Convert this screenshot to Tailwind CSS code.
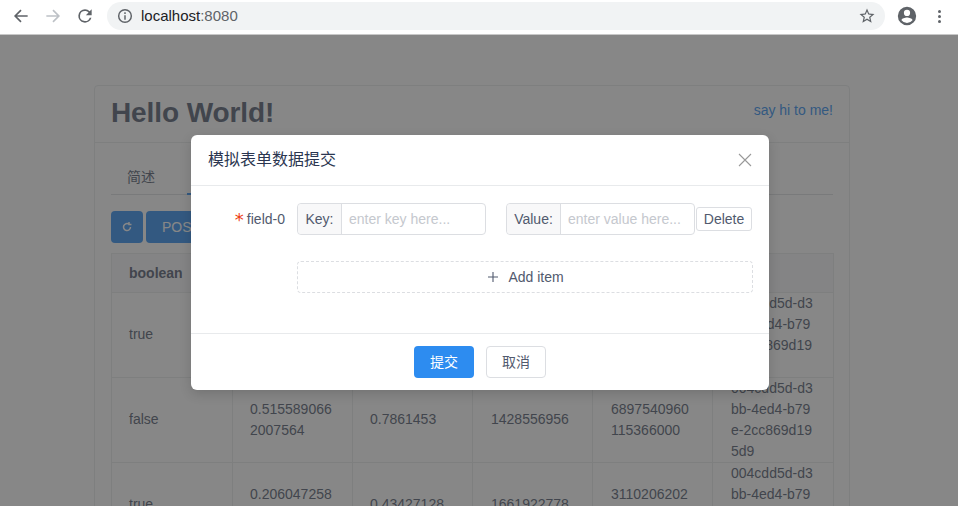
<!DOCTYPE html>
<html lang="zh">
<head>
<meta charset="utf-8">
<script src="https://cdn.jsdelivr.net/npm/@tailwindcss/browser@4"></script>
<title>localhost:8080</title>
</head>
<body class="relative h-[506px] w-[958px] overflow-hidden bg-white font-['Liberation_Sans','Noto_Sans_CJK_SC',sans-serif] text-[14px] text-[#515a6e]">
  <!-- Browser toolbar -->
  <header class="relative z-30 flex h-[35px] items-center border-b border-[#c8c8c8] bg-white pb-[2px]">
    <div class="flex w-[107px] items-center pl-[11px]">
      <svg class="h-5 w-5" viewBox="0 0 24 24" fill="none" stroke="#5f6368" stroke-width="2"><path d="M20 12H5M12 5l-7 7 7 7"/></svg>
      <svg class="ml-3 h-5 w-5" viewBox="0 0 24 24" fill="none" stroke="#bdc1c6" stroke-width="2"><path d="M4 12h15M12 5l7 7-7 7"/></svg>
      <svg class="ml-3 h-5 w-5" viewBox="0 0 24 24" fill="#5f6368"><path d="M17.65 6.35A7.96 7.96 0 0 0 12 4a8 8 0 1 0 7.73 10h-2.08A6 6 0 1 1 12 6c1.66 0 3.14.69 4.22 1.78L13 11h7V4l-2.35 2.35z"/></svg>
    </div>
    <div class="flex h-[28px] w-[778px] items-center rounded-full bg-[#f1f3f4] pl-[10px] pr-[9px]">
      <svg class="h-4 w-4" viewBox="0 0 24 24" fill="none" stroke="#5f6368" stroke-width="2.2"><circle cx="12" cy="12" r="9.5"/><path d="M12 11v6.5M12 6.5v2.4"/></svg>
      <span class="ml-2 text-[15px] text-[#202124]">localhost<span class="text-[#5f6368]">:8080</span></span>
      <svg class="ml-auto h-[18px] w-[18px]" viewBox="0 0 24 24" fill="#5f6368"><path d="M22 9.24l-7.19-.62L12 2 9.19 8.63 2 9.24l5.46 4.73L5.82 21 12 17.27 18.18 21l-1.63-7.03L22 9.24zM12 15.4l-3.76 2.27 1-4.28-3.32-2.88 4.38-.38L12 6.1l1.71 4.04 4.38.38-3.32 2.88 1 4.28L12 15.4z"/></svg>
    </div>
    <svg class="ml-[11px] h-[22px] w-[22px]" viewBox="0 0 24 24" fill="#5f6368"><path d="M12 2a10 10 0 1 0 0 20 10 10 0 0 0 0-20zm0 3.2a3.4 3.4 0 1 1 0 6.8 3.4 3.4 0 0 1 0-6.8zm0 14.4a7.6 7.6 0 0 1-6-3c.1-2 4-3 6-3s5.900 1 6 3a7.600 7.600 0 0 1-6 3z"/></svg>
    <div class="ml-[20px] flex flex-col gap-[2px]">
      <span class="h-[3px] w-[3px] rounded-full bg-[#5f6368]"></span>
      <span class="h-[3px] w-[3px] rounded-full bg-[#5f6368]"></span>
      <span class="h-[3px] w-[3px] rounded-full bg-[#5f6368]"></span>
    </div>
  </header>

  <!-- Page behind the modal -->
  <main class="pl-[94px] pt-[50px]">
    <section class="w-[756px] rounded border border-[#e8eaec] bg-white">
      <div class="flex h-[57px] items-center justify-between border-b border-[#e8eaec] px-4 pb-[2px]">
        <h1 class="text-[28px] font-bold leading-none tracking-[-0.1px] text-[#515a6e]">Hello World!</h1>
        <a class="relative -top-[3px] text-[14px] text-[#2d8cf0]">say hi to me!</a>
      </div>
      <div class="px-4 pt-[17px]">
        <div class="flex h-[35px] border-b border-[#dcdee2]">
          <div class="mr-4 px-4 pt-[7px] leading-[21px]">简述</div>
          <div class="-mb-px border-b-2 border-[#2d8cf0] px-4 pt-[7px] leading-[21px] text-[#2d8cf0]">数据</div>
        </div>
        <div class="mt-4 flex gap-[3px]">
          <button class="flex h-8 w-8 items-center justify-center rounded bg-[#2d8cf0]">
            <svg class="h-3 w-3" viewBox="0 0 24 24" fill="none" stroke="#fff" stroke-width="3"><path d="M19 12a7 7 0 1 1-3-5.700M16 2v5h5"/></svg>
          </button>
          <button class="h-8 rounded bg-[#2d8cf0] px-4 text-white">POST</button>
        </div>
        <table class="mt-[10px] w-[722px] table-fixed border border-[#e8eaec] leading-[21px]">
          <colgroup><col class="w-[121px]"><col class="w-[120px]"><col class="w-[120px]"><col class="w-[120px]"><col class="w-[120px]"><col class="w-[121px]"></colgroup>
          <thead>
            <tr class="h-[39px] bg-[#f8f8f9] font-bold">
              <th class="border border-[#e8eaec] pl-[17px] pr-[18px] text-left">boolean</th>
              <th class="border border-[#e8eaec] pl-[17px] pr-[18px] text-left">double</th>
              <th class="border border-[#e8eaec] pl-[17px] pr-[18px] text-left">float</th>
              <th class="border border-[#e8eaec] px-[18px] text-left">int</th>
              <th class="border border-[#e8eaec] px-[18px] text-left">long</th>
              <th class="border border-[#e8eaec] px-[18px] text-left">uuid</th>
            </tr>
          </thead>
          <tbody class="break-all">
            <tr class="h-[85px]">
              <td class="border border-[#e8eaec] pb-px pl-[17px] pr-[18px]">true</td>
              <td class="border border-[#e8eaec] pl-[17px] pr-[18px]">0.742613092</td>
              <td class="border border-[#e8eaec] pb-px pl-[17px] pr-[18px]">0.2719473</td>
              <td class="border border-[#e8eaec] pb-px px-[18px]">1730254188</td>
              <td class="border border-[#e8eaec] pb-px px-[18px]">4502118837</td>
              <td class="border border-[#e8eaec] px-[18px]">004cdd5d-d3bb-4ed4-b79e-2cc869d195d9</td>
            </tr>
            <tr class="h-[85px]">
              <td class="border border-[#e8eaec] pb-px pl-[17px] pr-[18px]">false</td>
              <td class="border border-[#e8eaec] pl-[17px] pr-[18px]">0.5155890662007564</td>
              <td class="border border-[#e8eaec] pb-px pl-[17px] pr-[18px]">0.7861453</td>
              <td class="border border-[#e8eaec] pb-px px-[18px]">1428556956</td>
              <td class="border border-[#e8eaec] px-[18px]">6897540960115366000</td>
              <td class="border border-[#e8eaec] px-[18px]">004cdd5d-d3bb-4ed4-b79e-2cc869d195d9</td>
            </tr>
            <tr class="h-[85px]">
              <td class="border border-[#e8eaec] pb-px pl-[17px] pr-[18px]">true</td>
              <td class="border border-[#e8eaec] pl-[17px] pr-[18px]">0.2060472581937705</td>
              <td class="border border-[#e8eaec] pb-px pl-[17px] pr-[18px]">0.43427128</td>
              <td class="border border-[#e8eaec] pb-px px-[18px]">1661922778</td>
              <td class="border border-[#e8eaec] px-[18px]">3110206202781954000</td>
              <td class="border border-[#e8eaec] px-[18px]">004cdd5d-d3bb-4ed4-b79e-2cc869d195d9</td>
            </tr>
          </tbody>
        </table>
      </div>
    </section>
  </main>

  <!-- Mask -->
  <div class="absolute inset-x-0 bottom-0 top-[35px] z-10 bg-[rgba(55,55,55,0.6)]"></div>

  <!-- Modal -->
  <div class="absolute left-[191px] top-[135px] z-20 w-[578px] rounded-md bg-white shadow-[0_4px_12px_rgba(0,0,0,0.15)]">
    <div class="flex h-[51px] items-center justify-between border-b border-[#e8eaec] pl-[17px] pr-[17px]">
      <span class="text-[16px] text-[#2b3650]">模拟表单数据提交</span>
      <svg class="h-[14px] w-[14px]" viewBox="0 0 14 14" fill="none" stroke="#999" stroke-width="1.100"><path d="M1 1l12 12M13 1L1 13"/></svg>
    </div>
    <div class="h-[147px] pt-[17px]">
      <div class="flex h-8 items-center">
        <label class="w-[106px] pr-3 text-right"><span class="relative top-[2px] mr-[3px] font-['DejaVu_Sans'] text-[18px] leading-none text-[#ed4014]">*</span>field-0</label>
        <div class="flex h-8 w-[189px] rounded border border-[#dcdee2]">
          <span class="flex w-[44px] items-center justify-center rounded-l bg-[#f8f8f9] border-r border-[#dcdee2]">Key:</span>
          <span class="flex items-center pl-[7px] text-[#c5c8ce]">enter key here...</span>
        </div>
        <div class="ml-[20px] flex h-8 w-[189px] rounded border border-[#dcdee2]">
          <span class="flex w-[54px] items-center justify-center rounded-l bg-[#f8f8f9] border-r border-[#dcdee2]">Value:</span>
          <span class="flex items-center pl-[7px] text-[#c5c8ce]">enter value here...</span>
        </div>
        <button class="ml-px h-6 w-[56px] rounded-[3px] border border-[#dcdee2] bg-white text-[#515a6e]">Delete</button>
      </div>
      <div class="ml-[106px] mt-[26px] flex h-8 w-[456px] items-center justify-center gap-[10px] rounded border border-dashed border-[#dcdee2] pl-[2px]">
        <svg class="h-[10px] w-[10px]" viewBox="0 0 10 10" stroke="#515a6e" stroke-width="1.100"><path d="M5 0v10M0 5h10"/></svg>
        <span>Add item</span>
      </div>
    </div>
    <div class="flex h-[57px] items-start justify-center gap-3 border-t border-[#e8eaec] pt-3">
      <button class="h-8 w-[60px] rounded bg-[#2d8cf0] text-white">提交</button>
      <button class="h-8 w-[60px] rounded border border-[#dcdee2] bg-white text-[#515a6e]">取消</button>
    </div>
  </div>
</body>
</html>
